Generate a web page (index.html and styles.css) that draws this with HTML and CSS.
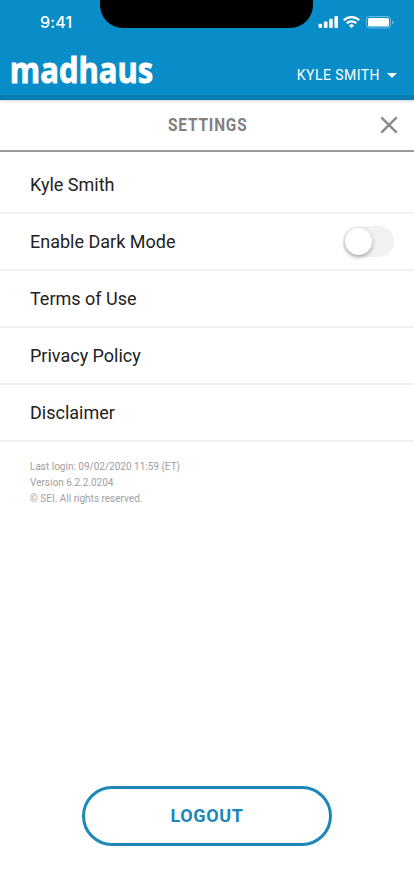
FILE: index.html
```html
<!DOCTYPE html>
<html lang="en">
<head>
<meta charset="utf-8">
<title>Settings</title>
<link rel="stylesheet" href="styles.css">
</head>
<body>
<div class="app">
  <header class="header">
    <div class="status">
      <span class="time">9:41</span>
      <svg class="indicators" width="76" height="14" viewBox="0 0 76 14" fill="#fff">
        <rect x="0.5" y="8.8" width="3.6" height="4.2" rx="1"/>
        <rect x="5.9" y="6.4" width="3.6" height="6.6" rx="1"/>
        <rect x="11.2" y="3.7" width="3.6" height="9.3" rx="1"/>
        <rect x="16.4" y="1" width="3.6" height="12" rx="1"/>
        <g fill="none" stroke="#fff" stroke-width="2.3">
          <path d="M25.8 5.2a11 11 0 0 1 15.4 0"/>
          <path d="M28.7 8.3a6.8 6.8 0 0 1 9.6 0"/>
        </g>
        <path d="M30.9 10.4a3.8 3.8 0 0 1 5.2 0l-2.6 2.6z"/>
        <rect x="48.5" y="1.5" width="24" height="11.5" rx="3" fill="none" stroke="#fff" stroke-opacity=".4"/>
        <rect x="50" y="3" width="21" height="8.5" rx="1.5"/>
        <path d="M74 5.4q1.5.6 1.5 1.9T74 9.2z" fill-opacity=".45"/>
      </svg>
      <div class="notch"></div>
    </div>
    <div class="brandbar">
      <svg class="logo" width="160" height="36"><text x="-1.2" y="26.7" textLength="143.4" lengthAdjust="spacingAndGlyphs">madhaus</text></svg>
      <div class="user"><span>KYLE SMITH</span><i class="caret"></i></div>
    </div>
  </header>
  <div class="titlebar">
    <svg class="title" width="86" height="26"><text x="0" y="19" textLength="79.5" lengthAdjust="spacingAndGlyphs">SETTINGS</text></svg>
    <svg class="close" width="18" height="18" viewBox="0 0 18 18"><path d="M1.3 1.3l15.4 15.4M16.7 1.3L1.3 16.7"/></svg>
  </div>
  <main>
    <ul class="list">
      <li>Kyle Smith</li>
      <li>Enable Dark Mode<span class="toggle"><span class="knob"></span></span></li>
      <li>Terms of Use</li>
      <li>Privacy Policy</li>
      <li>Disclaimer</li>
    </ul>
    <div class="meta">
      <p>Last login: 09/02/2020 11:59 (ET)</p>
      <p>Version 6.2.2.0204</p>
      <p>© SEI. All rights reserved.</p>
    </div>
  </main>
  <button class="logout">LOGOUT</button>
</div>
</body>
</html>
```
FILE: styles.css
```css
* { box-sizing: border-box; margin: 0; padding: 0; }
body { font-family: Roboto, "Liberation Sans", sans-serif; background: #fff; color: #222; }
.app { width: 414px; height: 896px; display: flex; flex-direction: column; overflow: hidden; }
.header { height: 100px; flex: none; background: #088dc8; border-bottom: 5px solid #067ab1; box-shadow: 0 1px 3px rgba(0,0,0,.2); }
.status { position: relative; height: 50px; display: flex; justify-content: space-between; padding: 15px 20px 0 40px; color: #fff; }
.time { font: 500 16px/14px Inter, sans-serif; letter-spacing: .2px; }
.notch { position: absolute; left: 100px; top: 0; width: 213px; height: 28px; background: #000; border-radius: 0 0 23px 23px; }
.brandbar { height: 45px; display: flex; justify-content: space-between; padding: 6px 17px 0 11px; }
.logo { overflow: visible; }
.logo text { font: 700 35px "Open Sans", "Noto Sans", sans-serif; fill: #fff; stroke: #fff; stroke-width: .9px; }
.user { display: flex; align-items: center; height: 38px; color: #fff; font-size: 14px; letter-spacing: .45px; }
.caret { margin-left: 7px; border: 5px solid transparent; border-top-color: #fff; border-bottom: 0; }
.titlebar { height: 52px; flex: none; display: flex; align-items: center; justify-content: space-between; border-bottom: 2px solid #999; padding: 0 16px 0 167.5px; }
.title { overflow: visible; }
.title text { font: 700 18px Roboto, sans-serif; letter-spacing: 1px; fill: #808080; }
.close path { fill: none; stroke: #8c8c8c; stroke-width: 2.5; }
.list { list-style: none; padding-top: 5px; }
.list li { height: 57px; display: flex; align-items: center; justify-content: space-between; padding: 0 20px 0 30px; border-bottom: 2px solid #f1f1f1; font-size: 18px; }
.toggle { width: 51px; height: 31px; border-radius: 16px; background: #f1f1f1; padding: 2px; }
.knob { display: block; width: 27px; height: 27px; border-radius: 50%; background: #fff; box-shadow: 0 2px 4px rgba(0,0,0,.32); }
.meta { padding: 17px 30px; color: #a0a0a0; font-size: 10px; line-height: 16px; }
.logout { width: 250px; height: 60px; margin: auto auto 50px; border: 3px solid #1c87b8; border-radius: 30px; background: #fff; color: #1c87b8; font: 700 18px Roboto, sans-serif; letter-spacing: .6px; padding-bottom: 2px; }
```
